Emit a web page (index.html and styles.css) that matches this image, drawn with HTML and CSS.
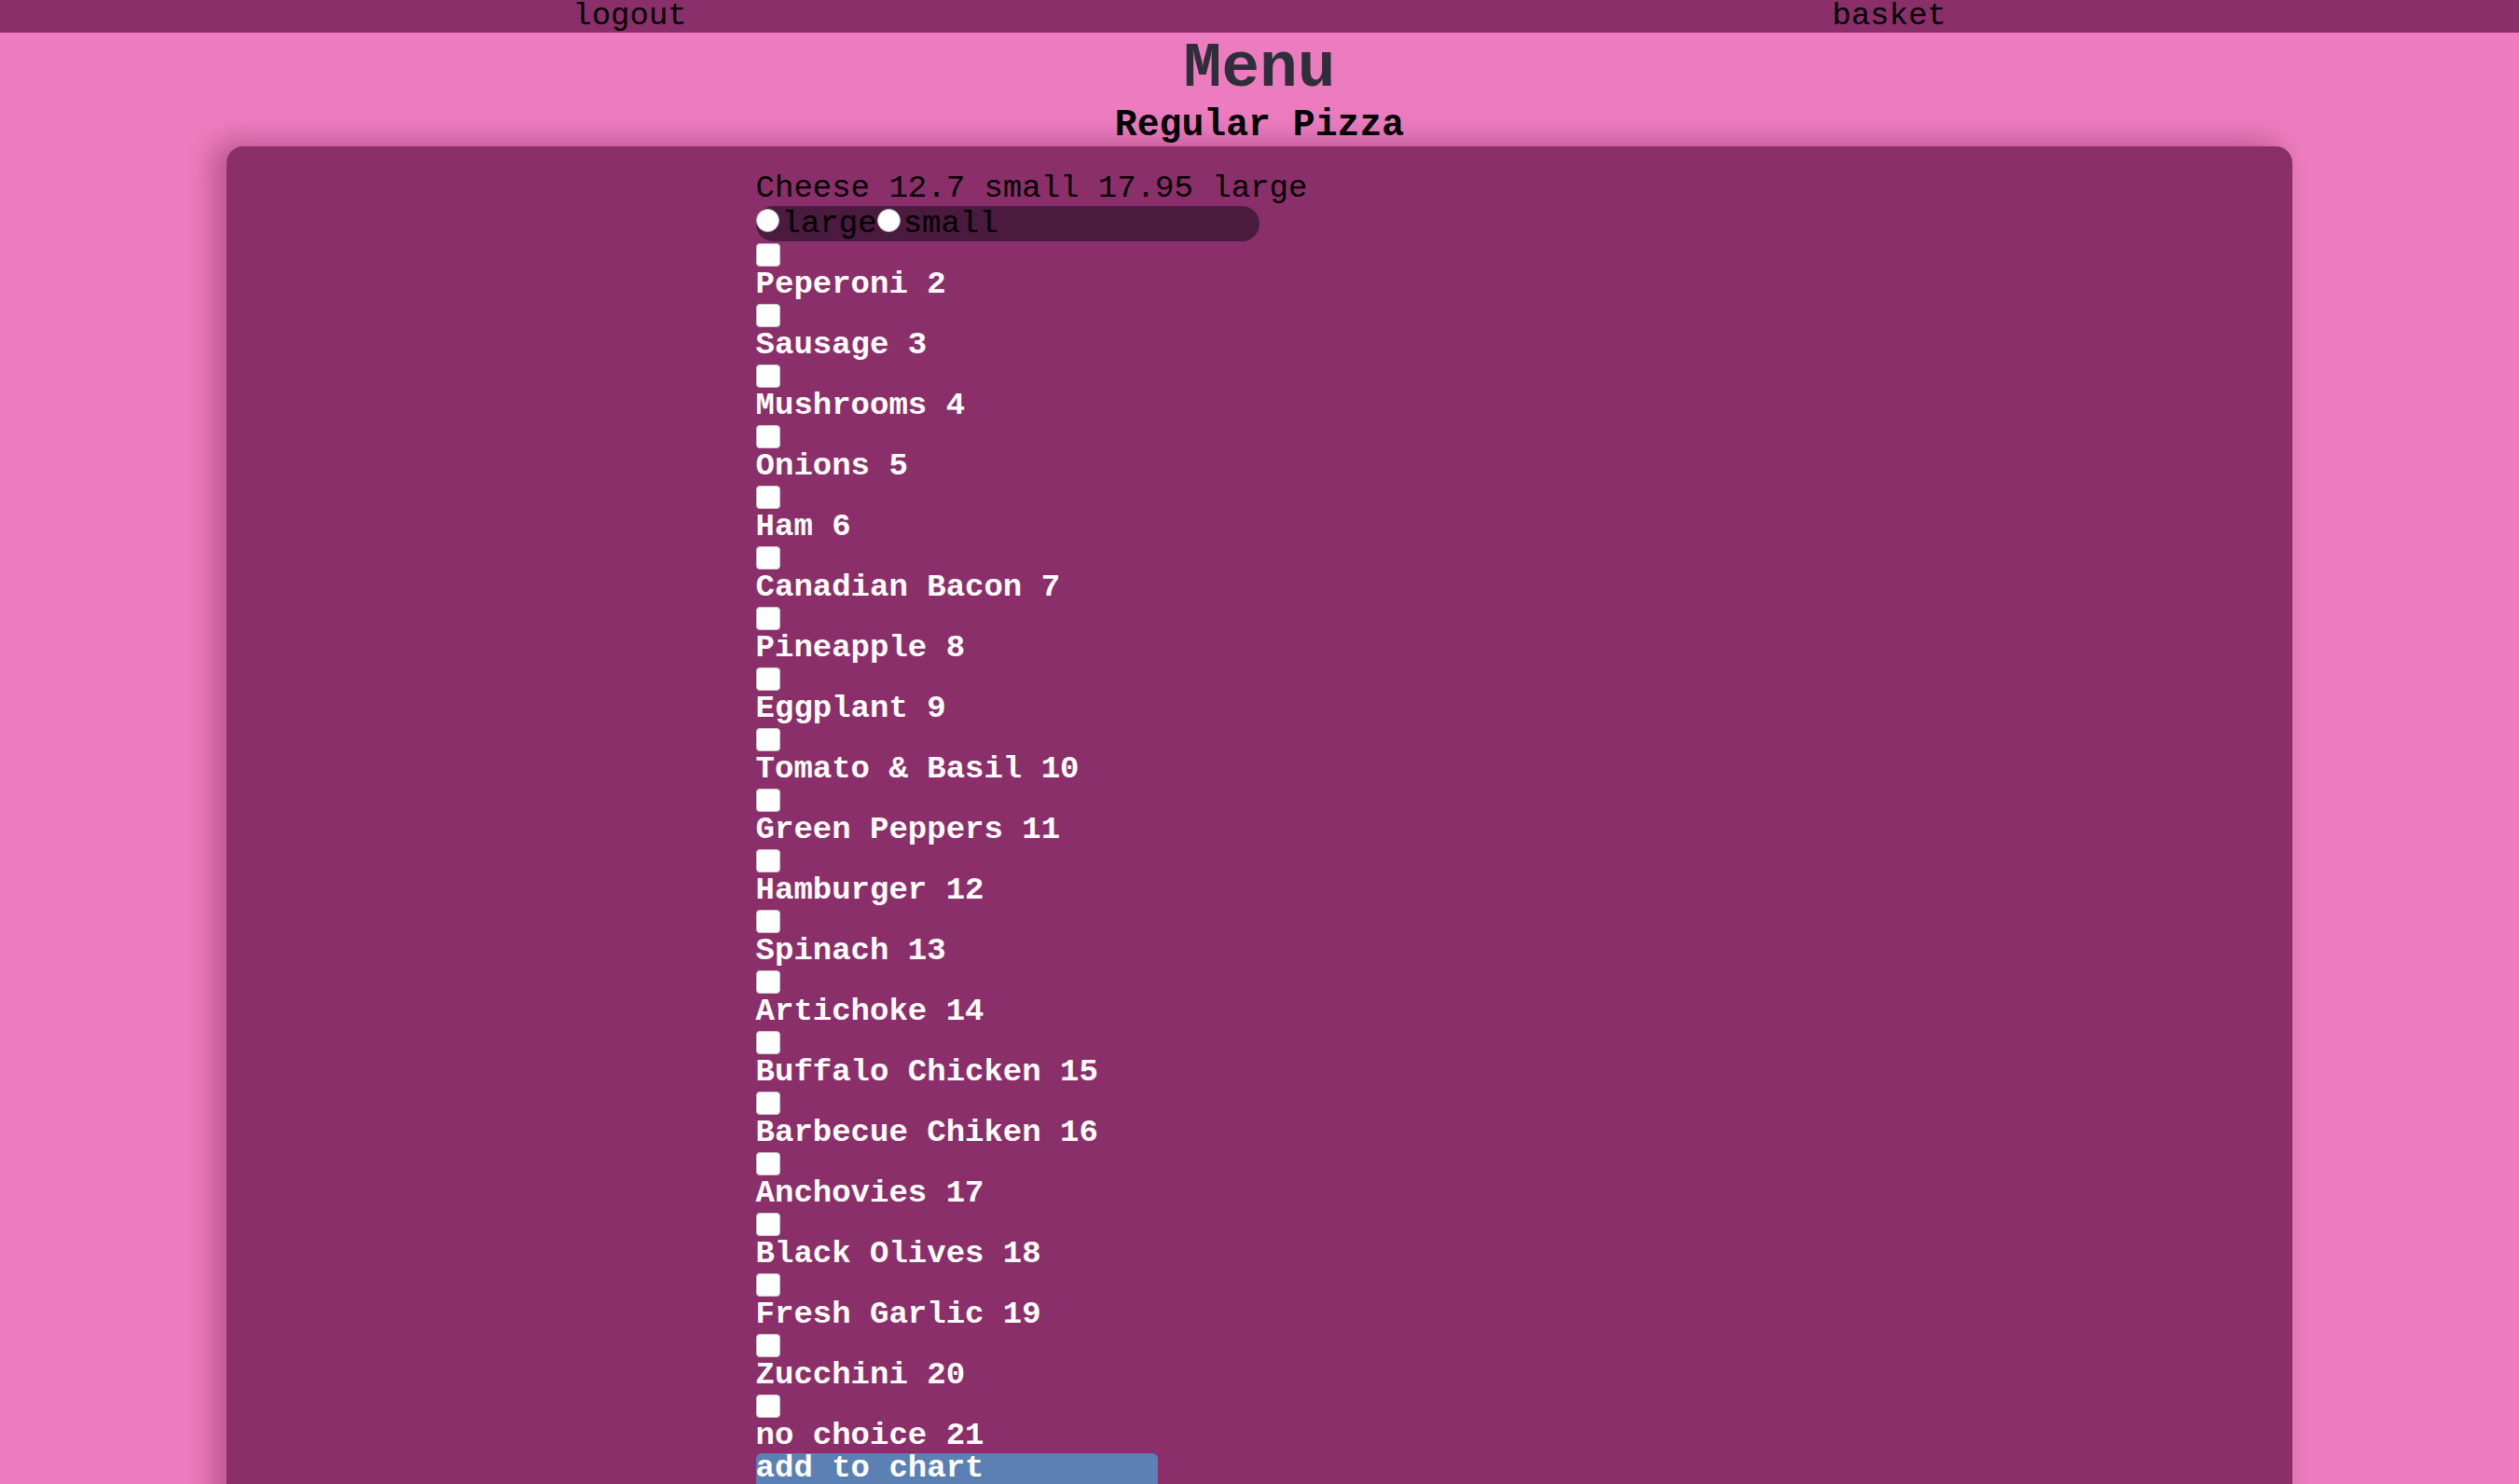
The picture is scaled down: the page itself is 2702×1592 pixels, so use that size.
FILE: index.html
```html
<!DOCTYPE html>
<html lang="en">
<head>
<meta charset="utf-8">
<title>Menu</title>
<link rel="stylesheet" href="styles.css">
</head>
<body>
<nav class="topnav">
  <a class="navlink" href="#">logout</a>
  <a class="navlink" href="#">basket</a>
</nav>
<h1 class="title">Menu</h1>
<h3 class="subtitle">Regular Pizza</h3>
<main class="card">
  <form class="order">
    <div class="price">Cheese 12.7 small 17.95 large</div>
    <div class="sizes"><input class="radio" type="radio" name="size" value="large">large<input class="radio" type="radio" name="size" value="small">small</div>
    <input class="check" type="checkbox" id="t2"><label class="topping" for="t2">Peperoni 2</label>
    <input class="check" type="checkbox" id="t3"><label class="topping" for="t3">Sausage 3</label>
    <input class="check" type="checkbox" id="t4"><label class="topping" for="t4">Mushrooms 4</label>
    <input class="check" type="checkbox" id="t5"><label class="topping" for="t5">Onions 5</label>
    <input class="check" type="checkbox" id="t6"><label class="topping" for="t6">Ham 6</label>
    <input class="check" type="checkbox" id="t7"><label class="topping" for="t7">Canadian Bacon 7</label>
    <input class="check" type="checkbox" id="t8"><label class="topping" for="t8">Pineapple 8</label>
    <input class="check" type="checkbox" id="t9"><label class="topping" for="t9">Eggplant 9</label>
    <input class="check" type="checkbox" id="t10"><label class="topping" for="t10">Tomato &amp; Basil 10</label>
    <input class="check" type="checkbox" id="t11"><label class="topping" for="t11">Green Peppers 11</label>
    <input class="check" type="checkbox" id="t12"><label class="topping" for="t12">Hamburger 12</label>
    <input class="check" type="checkbox" id="t13"><label class="topping" for="t13">Spinach 13</label>
    <input class="check" type="checkbox" id="t14"><label class="topping" for="t14">Artichoke 14</label>
    <input class="check" type="checkbox" id="t15"><label class="topping" for="t15">Buffalo Chicken 15</label>
    <input class="check" type="checkbox" id="t16"><label class="topping" for="t16">Barbecue Chiken 16</label>
    <input class="check" type="checkbox" id="t17"><label class="topping" for="t17">Anchovies 17</label>
    <input class="check" type="checkbox" id="t18"><label class="topping" for="t18">Black Olives 18</label>
    <input class="check" type="checkbox" id="t19"><label class="topping" for="t19">Fresh Garlic 19</label>
    <input class="check" type="checkbox" id="t20"><label class="topping" for="t20">Zucchini 20</label>
    <input class="check" type="checkbox" id="t21"><label class="topping" for="t21">no choice 21</label>
    <button class="add" type="button">add to chart</button>
  </form>
</main>
</body>
</html>
```
FILE: styles.css
```css
html, body {
  margin: 0;
  padding: 0;
}
body {
  background: #ec7cbf;
  font-family: "Liberation Mono", "Courier New", monospace;
  font-size: 34px;
  color: #000;
}
.topnav {
  display: flex;
  justify-content: space-around;
  height: 35px;
  background: #8b2f6b;
}
.navlink {
  color: #000;
  text-decoration: none;
  line-height: 34px;
}
.title {
  margin: 0;
  text-align: center;
  font-size: 68px;
  font-weight: bold;
  color: #2e2f3a;
}
.subtitle {
  margin: 0;
  text-align: center;
  font-size: 39.8px;
  font-weight: bold;
  color: #000;
}
.card {
  box-sizing: border-box;
  width: 82%;
  margin: 0 auto;
  background: #8b2f6b;
  border-radius: 18px;
  padding: 26px 0 200px 21%;
  box-shadow: -14px -4px 30px rgba(90, 10, 60, 0.35);
}
.order {
  width: 540px;
}
.price {
  color: #000;
  white-space: nowrap;
}
.sizes {
  background: #4a1a3f;
  border-radius: 19px;
  color: #000;
  white-space: nowrap;
}
.radio {
  appearance: none;
  -webkit-appearance: none;
  width: 25px;
  height: 25px;
  margin: 0 3px 0 0;
  border-radius: 50%;
  background: #fff;
  border: 1px solid #bbb;
  box-sizing: border-box;
  vertical-align: baseline;
}
.check {
  appearance: none;
  -webkit-appearance: none;
  display: block;
  width: 26px;
  height: 25px;
  margin: 2px 0 0 0;
  border-radius: 4px;
  background: #fff;
  border: 1px solid #c9c9c9;
  box-sizing: border-box;
}
.topping {
  display: block;
  color: #fff;
  font-weight: bold;
  white-space: nowrap;
}
.add {
  display: block;
  width: 431px;
  margin: 0;
  padding: 0 0 20px 0;
  border: none;
  border-radius: 6px;
  background: #5b80b4;
  color: #fff;
  font-family: inherit;
  font-size: 34px;
  font-weight: bold;
  text-align: left;
  line-height: 32px;
}
```
